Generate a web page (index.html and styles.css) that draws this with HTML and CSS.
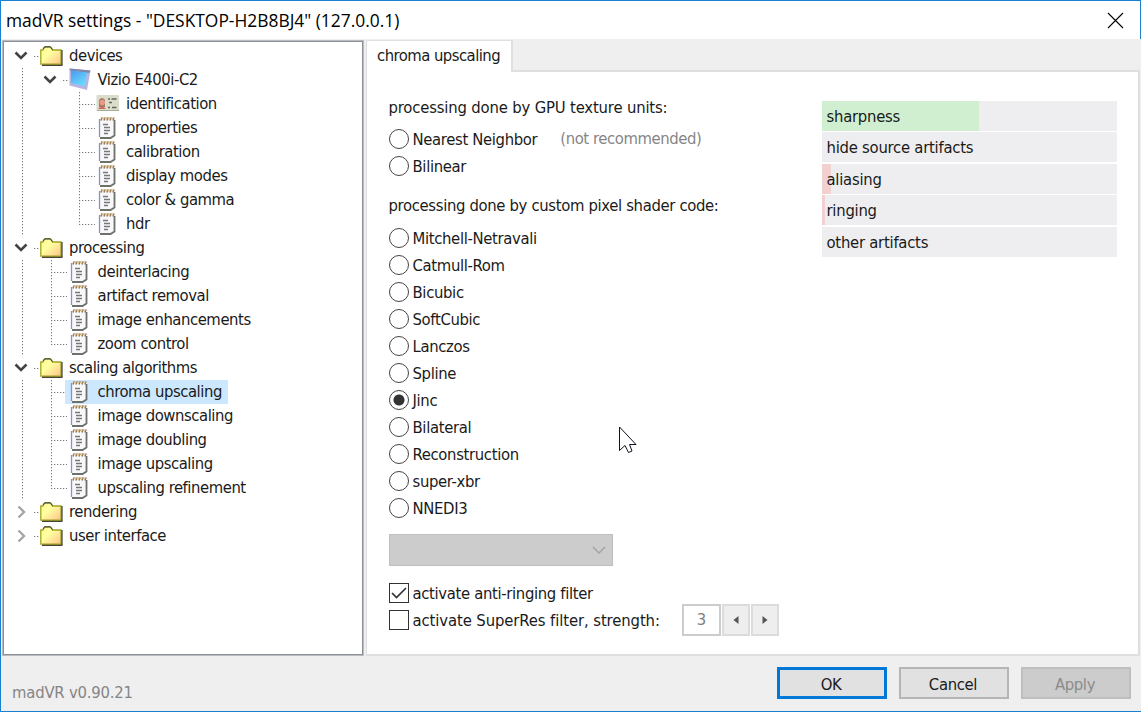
FILE: index.html
```html
<!DOCTYPE html>
<html lang="en">
<head>
    <meta charset="UTF-8">
    <meta name="viewport" content="width=device-width, initial-scale=1.0">
    <title>madVR settings</title>
    <link rel="stylesheet" href="styles.css">
</head>
<body>
    <svg class="defs" width="0" height="0">
        <defs>
            <linearGradient id="gold" x1="0" y1="0" x2="1" y2="1">
                <stop offset="0.4" stop-color="#ffffa0"/>
                <stop offset="1" stop-color="#ffc08c"/>
            </linearGradient>
            <linearGradient id="blue" x1="0" y1="0" x2="0.6" y2="1">
                <stop offset="0" stop-color="#4f97ee"/>
                <stop offset="1" stop-color="#66dcff"/>
            </linearGradient>
        </defs>
        <symbol id="folder" viewBox="0 0 24 24">
            <path d="M2 6 H22.500 V21.800 H2 Z" fill="#151510"/>
            <path d="M0.800 20.200 V6 H3 L4.500 3.200 H10.500 L12.500 6 H21 V20.200 Z" fill="url(#gold)" stroke="#a3a320" stroke-width="1.300"/>
            <path d="M3 5 L4.500 2.800 H10.500 L12.500 5.500" fill="none" stroke="#333" stroke-width="1"/>
        </symbol>
        <symbol id="monitor" viewBox="0 0 24 24">
            <path d="M0.500 0.500 L21.500 2.500 18 22 0.500 17.500 Z" fill="#b4b6e2"/>
            <path d="M0.500 0.500 L21.500 2.500 20 5 1 2.500 Z" fill="#7f86a8"/>
            <path d="M2 2.500 L18 4.500 15.500 18 2 15 Z" fill="url(#blue)"/>
        </symbol>
        <symbol id="card" viewBox="0 0 24 24">
            <rect x="0.500" y="3" width="22.500" height="16" rx="1" fill="#dcdccb"/>
            <path d="M1 18.500 H23" stroke="#aaa994"/>
            <path d="M3 15 V8 Q6 4 9 8 V15 Z" fill="#a57c64"/>
            <circle cx="6.300" cy="10.500" r="2.700" fill="#e99a88"/>
            <path d="M2 17 Q6 12 10 17 Z" fill="#c96a5c"/>
            <path d="M12 7 H14 M15.500 7 H20.500 M13 10.500 H16 M12 15.500 H14 M16 15.500 H20.500" stroke="#5a6b60" stroke-width="1.700"/>
        </symbol>
        <symbol id="page" viewBox="0 0 24 24">
            <path d="M4 2.500 H19 V19 L15 22 H4 Z" fill="#f8f8fb"/>
            <path d="M3.500 3 V21" stroke="#8f8cd0" stroke-width="1.300"/>
            <path d="M4 22 H14.500 L18.500 19.500 V4" fill="none" stroke="#6c716c" stroke-width="1.800"/>
            <path d="M7 8.500 H12 M8 11.500 H14 M8 14.500 H14 M8 17.500 H12" stroke="#777" stroke-width="1.300"/>
            <path d="M5 4.500 L6 1.500 M8 4.500 L9 1.500 M11 4.500 L12 1.500 M14 4.500 L15 1.500 M17 4.500 L18 1.500" stroke="#957448" stroke-width="1.500"/>
            <path d="M5 2 H18" stroke="#c9a970" stroke-width="1"/>
        </symbol>
        <symbol id="down" viewBox="0 0 14 14">
            <path d="M1.500 3.500 L7 9 12.500 3.500" fill="none" stroke="#444" stroke-width="2.600"/>
        </symbol>
        <symbol id="right" viewBox="0 0 14 14">
            <path d="M4.500 1.500 L10 7 4.500 12.500" fill="none" stroke="#a6a6a6" stroke-width="2.400"/>
        </symbol>
    </svg>

    <div class="window">
        <div class="titlebar">
            <span class="title">madVR settings - "DESKTOP-H2B8BJ4" (127.0.0.1)</span>
            <svg class="close" width="17" height="17" viewBox="0 0 17 17"><path d="M1 1 L16 16 M16 1 L1 16" stroke="#000" stroke-width="1.100"/></svg>
        </div>

        <div class="main">
            <ul class="tree">
                <li>
                    <div class="row"><svg class="chev"><use href="#down"/></svg><i></i><svg class="icon"><use href="#folder"/></svg><span>devices</span></div>
                    <ul class="group">
                        <li>
                            <div class="row"><svg class="chev"><use href="#down"/></svg><i></i><svg class="icon"><use href="#monitor"/></svg><span>Vizio E400i-C2</span></div>
                            <ul class="leaves nested">
                                <li class="row"><svg class="icon"><use href="#card"/></svg><span>identification</span></li>
                                <li class="row"><svg class="icon"><use href="#page"/></svg><span>properties</span></li>
                                <li class="row"><svg class="icon"><use href="#page"/></svg><span>calibration</span></li>
                                <li class="row"><svg class="icon"><use href="#page"/></svg><span>display modes</span></li>
                                <li class="row"><svg class="icon"><use href="#page"/></svg><span>color &amp; gamma</span></li>
                                <li class="row"><svg class="icon"><use href="#page"/></svg><span>hdr</span></li>
                            </ul>
                        </li>
                    </ul>
                </li>
                <li>
                    <div class="row"><svg class="chev"><use href="#down"/></svg><i></i><svg class="icon"><use href="#folder"/></svg><span>processing</span></div>
                    <div class="group">
                        <ul class="leaves">
                            <li class="row"><svg class="icon"><use href="#page"/></svg><span>deinterlacing</span></li>
                            <li class="row"><svg class="icon"><use href="#page"/></svg><span>artifact removal</span></li>
                            <li class="row"><svg class="icon"><use href="#page"/></svg><span>image enhancements</span></li>
                            <li class="row"><svg class="icon"><use href="#page"/></svg><span>zoom control</span></li>
                        </ul>
                    </div>
                </li>
                <li>
                    <div class="row"><svg class="chev"><use href="#down"/></svg><i></i><svg class="icon"><use href="#folder"/></svg><span>scaling algorithms</span></div>
                    <div class="group">
                        <ul class="leaves">
                            <li class="row selected"><svg class="icon"><use href="#page"/></svg><span>chroma upscaling</span></li>
                            <li class="row"><svg class="icon"><use href="#page"/></svg><span>image downscaling</span></li>
                            <li class="row"><svg class="icon"><use href="#page"/></svg><span>image doubling</span></li>
                            <li class="row"><svg class="icon"><use href="#page"/></svg><span>image upscaling</span></li>
                            <li class="row"><svg class="icon"><use href="#page"/></svg><span>upscaling refinement</span></li>
                        </ul>
                    </div>
                </li>
                <li>
                    <div class="row"><svg class="chev"><use href="#right"/></svg><i></i><svg class="icon"><use href="#folder"/></svg><span>rendering</span></div>
                </li>
                <li>
                    <div class="row"><svg class="chev"><use href="#right"/></svg><i></i><svg class="icon"><use href="#folder"/></svg><span>user interface</span></div>
                </li>
            </ul>

            <div class="tabs">
                <div class="tabbar">
                    <div class="tab">chroma upscaling</div>
                    <div class="tabfill"></div>
                </div>
                <div class="panel">
                    <div class="options">
                        <p class="wide">processing done by GPU texture units:</p>
                        <div class="radios">
                            <label><b class="radio"></b><span>Nearest Neighbor</span><em>(not recommended)</em></label>
                            <label><b class="radio"></b><span>Bilinear</span></label>
                        </div>
                        <p>processing done by custom pixel shader code:</p>
                        <div class="radios">
                            <label><b class="radio"></b><span>Mitchell-Netravali</span></label>
                            <label><b class="radio"></b><span>Catmull-Rom</span></label>
                            <label><b class="radio"></b><span>Bicubic</span></label>
                            <label><b class="radio"></b><span>SoftCubic</span></label>
                            <label><b class="radio"></b><span>Lanczos</span></label>
                            <label><b class="radio"></b><span>Spline</span></label>
                            <label><b class="radio on"></b><span>Jinc</span></label>
                            <label><b class="radio"></b><span>Bilateral</span></label>
                            <label><b class="radio"></b><span>Reconstruction</span></label>
                            <label><b class="radio"></b><span>super-xbr</span></label>
                            <label><b class="radio"></b><span>NNEDI3</span></label>
                        </div>
                        <div class="combo"><svg width="14" height="9" viewBox="0 0 14 9"><path d="M1 1 L7 7 13 1" fill="none" stroke="#a3a3a3" stroke-width="1.500"/></svg></div>
                        <label class="check"><b class="box"><svg width="18" height="18" viewBox="0 0 18 18"><path d="M2 9 L6.500 13.500 16 4" fill="none" stroke="#333" stroke-width="1.700"/></svg></b><span class="text">activate anti-ringing filter</span></label>
                        <label class="check wide"><b class="box"></b><span class="text">activate SuperRes filter, strength:</span>
                            <span class="spin">
                                <span class="value">3</span>
                                <span class="step"><svg width="6" height="8" viewBox="0 0 6 8"><path d="M5.500 0 V8 L0.500 4 Z" fill="#555"/></svg></span>
                                <span class="step"><svg width="6" height="8" viewBox="0 0 6 8"><path d="M0.500 0 V8 L5.500 4 Z" fill="#555"/></svg></span>
                            </span>
                        </label>
                    </div>
                    <div class="bars">
                        <div class="bar good" style="--value: 53.3%">sharpness</div>
                        <div class="bar">hide source artifacts</div>
                        <div class="bar bad" style="--value: 3%">aliasing</div>
                        <div class="bar bad" style="--value: 1%">ringing</div>
                        <div class="bar">other artifacts</div>
                    </div>
                </div>
            </div>
        </div>

        <div class="footer">
            <span class="version">madVR v0.90.21</span>
            <div class="button default">OK</div>
            <div class="button">Cancel</div>
            <div class="button disabled">Apply</div>
        </div>
        <svg class="cursor" width="20" height="30" viewBox="0 0 20 30"><path d="M1.500 1 V24.500 L7 19.500 10.500 26.500 14 25 11.500 18.500 H18 Z" fill="#fff" stroke="#111122" stroke-width="1"/></svg>
    </div>
</body>
</html>
```
FILE: styles.css
```css
* {
    margin: 0;
    padding: 0;
    box-sizing: border-box;
}
body {
    font: 16.5px/24px "DejaVu Sans Condensed", "DejaVu Sans", sans-serif;
    letter-spacing: -0.34px;
    color: #1a1a1a;
    white-space: nowrap;
}
ul {
    list-style: none;
}
.defs {
    position: absolute;
}
.window {
    position: relative;
    display: flex;
    flex-direction: column;
    width: 1141px;
    height: 712px;
    border: 1px solid #1a80d2;
    border-right: 0;
    background: #efefef;
    overflow: hidden;
}
.titlebar {
    display: flex;
    justify-content: space-between;
    align-items: center;
    height: 38px;
    padding: 0 16px 0 5px;
    border-right: 1px solid #1a80d2;
    background: #fff;
}
.title {
    font: 17.4px/38px "Open Sans", "Noto Sans", sans-serif;
    letter-spacing: 0;
    color: #000;
}
.main {
    display: flex;
    height: 617px;
    padding: 1px 0 0 1px;
}

/* tree */
.tree {
    width: 362px;
    height: 616px;
    padding-top: 3px;
    border: 1px solid #b9bbc0;
    box-shadow: inset 0 0 0 1px #8c9099;
    background: #fff;
    letter-spacing: -0.45px;
}
.row {
    display: flex;
    align-items: center;
    height: 24px;
    padding-left: 11px;
}
.row i {
    width: 5px;
    height: 1px;
    margin: 0 1px 0 6px;
    background: repeating-linear-gradient(90deg, #777 0 1px, #ddd 1px 2px, transparent 2px 3px);
}
.chev {
    width: 14px;
    height: 14px;
}
.icon {
    width: 24px;
    height: 24px;
}
.row span {
    padding-left: 5px;
}
.group {
    padding-left: 28.5px;
    background: repeating-linear-gradient(#777 0 1px, #ddd 1px 2px, transparent 2px 3px) 19px 0 / 1px 100% no-repeat;
}
.leaves .row {
    padding-left: 36px;
    background:
        repeating-linear-gradient(#777 0 1px, #ddd 1px 2px, transparent 2px 3px) 19px 0 / 1px 100% no-repeat,
        repeating-linear-gradient(90deg, #777 0 1px, #ddd 1px 2px, transparent 2px 3px) 19px 12px / 16px 1px no-repeat;
}
.leaves .row:last-child {
    background-size: 1px 12px, 16px 1px;
}
.leaves .row span {
    padding-left: 6px;
}
.nested {
    padding-left: 28.5px;
}
.selected {
    position: relative;
    z-index: 0;
}
.selected::before {
    content: "";
    position: absolute;
    z-index: -1;
    left: 33px;
    top: 0;
    width: 163px;
    height: 24px;
    background: #cce8ff;
}

/* tab */
.tabs {
    width: 774px;
    margin-left: 2px;
}
.tabbar {
    display: flex;
    height: 32px;
}
.tab {
    width: 147px;
    padding: 3px 0 0 10px;
    border: 2px solid #dfdfdf;
    border-width: 1px 2px 0 1px;
    background: #fff;
    letter-spacing: -0.53px;
}
.tabfill {
    flex: 1;
    border-bottom: 2px solid #dfdfdf;
}
.panel {
    display: flex;
    height: 584px;
    padding: 23.5px 20px 0 21.5px;
    border: 2px solid #dfdfdf;
    border-width: 0 2px 2px 1px;
    background: #fff;
}
.options {
    width: 433px;
}
.wide {
    letter-spacing: -0.17px;
}
.radios {
    padding: 6px 0 13px;
}
.radios + p {
    margin-top: 1.5px;
}
.radios label {
    display: flex;
    align-items: center;
    height: 27px;
}
.radios span,
.text {
    padding-top: 2px;
}
.radio {
    width: 20px;
    height: 20px;
    margin-right: 4px;
    border: 1.5px solid #444;
    border-radius: 50%;
}
.on {
    background: radial-gradient(circle, #333 5px, #fff 6px);
}
.radios em {
    margin-left: 23px;
    letter-spacing: -0.42px;
    font-style: normal;
    color: #858585;
}
.combo {
    display: flex;
    justify-content: flex-end;
    align-items: center;
    width: 224px;
    height: 32px;
    padding-right: 6px;
    margin-bottom: 13.5px;
    border: 1px solid #bfbfbf;
    background: #ccc;
}
.check {
    display: flex;
    align-items: center;
    height: 27px;
}
.check.wide {
    letter-spacing: -0.1px;
}
.box {
    width: 20px;
    height: 20px;
    margin-right: 4px;
    border: 1.5px solid #333;
}
.box svg {
    display: block;
}
.spin {
    display: flex;
    gap: 1px;
    margin-left: 22px;
    color: #808080;
}
.value,
.step {
    display: flex;
    justify-content: center;
    align-items: center;
    width: 28px;
    height: 32px;
    border: 2px solid #dcdcdc;
    background: #eee;
}
.value {
    width: 39px;
    border-color: #ccc;
    background: #fff;
}

/* quality bars */
.bars {
    display: grid;
    grid-template-rows: repeat(5, 30px);
    row-gap: 1.5px;
    width: 295px;
    padding-top: 5px;
    letter-spacing: -0.25px;
}
.bar {
    --fill: transparent;
    --value: 0%;
    padding-left: 5px;
    line-height: 31px;
    background: linear-gradient(var(--fill), var(--fill)) 0 0 / var(--value) 100% no-repeat #eeeef0;
}
.good {
    --fill: #d0efd0;
}
.bad {
    --fill: #f2d0d0;
}

/* footer */
.footer {
    display: flex;
    align-items: center;
    gap: 12px;
    height: 55px;
    padding: 0 10px 1px 11px;
}
.version {
    flex: 1;
    padding-top: 20px;
    letter-spacing: -0.2px;
    color: #858585;
}
.button {
    width: 110px;
    height: 32px;
    padding-right: 2px;
    border: 2px solid #b5b5b5;
    background: #e1e1e1;
    line-height: 31px;
    text-align: center;
}
.default {
    border: 3px solid #0078d7;
    line-height: 29px;
}
.disabled {
    border-color: #bfbfbf;
    background: #ccc;
    color: #8b8b8b;
}
.cursor {
    position: absolute;
    left: 617px;
    top: 425px;
}
```
